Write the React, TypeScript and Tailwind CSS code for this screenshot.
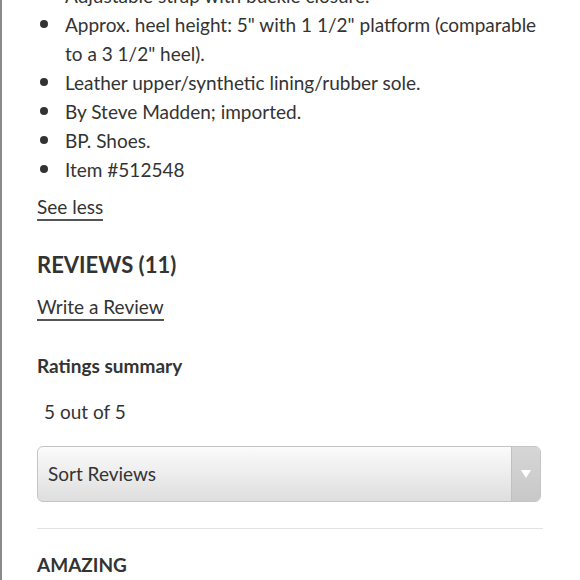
import React from "react";

const items = [
  "Adjustable strap with buckle closure.",
  "Approx. heel height: 5\" with 1 1/2\" platform (comparable to a 3 1/2\" heel).",
  "Leather upper/synthetic lining/rubber sole.",
  "By Steve Madden; imported.",
  "BP. Shoes.",
  "Item #512548",
];

export default function App() {
  return (
    <div
      className="w-[580px] h-[580px] overflow-hidden bg-white border-l-2 border-[#8a8a8a] text-[#333333]"
      style={{ fontFamily: "Lato, 'Open Sans', sans-serif" }}
    >
      <div className="pl-[35px] pr-[37px]">
        <ul className="mt-[-19px] text-[19px] leading-[29px]">
          {items.map((t) => (
            <li key={t} className="flex">
              <span className="w-[28px] shrink-0 flex pt-[10px] pl-[3px]">
                <span className="block w-[8px] h-[8px] rounded-full bg-[#333333]" />
              </span>
              <span>{t}</span>
            </li>
          ))}
        </ul>
        <div className="mt-[8px] text-[19px] leading-[29px]">
          <span className="border-b-2 border-[#555555] pb-[1px]">See less</span>
        </div>
        <h2 className="mt-[29px] text-[22px] font-bold leading-[30px]">REVIEWS (11)</h2>
        <div className="mt-[12px] text-[19px] leading-[29px]">
          <span className="border-b-2 border-[#555555] pb-[1px]">Write a Review</span>
        </div>
        <h3 className="mt-[30px] text-[19px] font-bold leading-[29px]">Ratings summary</h3>
        <div className="mt-[17px] pl-[7px] text-[19px] leading-[29px]">5 out of 5</div>
        <div className="mt-[20px] w-[504px] h-[56px] flex rounded-[6px] border border-[#c4c4c4] bg-gradient-to-b from-[#fbfbfb] to-[#dedede] overflow-hidden">
          <div className="flex-1 flex items-center pl-[10px] text-[19px]">Sort Reviews</div>
          <div className="w-[29px] flex items-center justify-center bg-gradient-to-b from-[#d6d6d6] to-[#c8c8c8] border-l border-[#c0c0c0]">
            <svg width="10" height="8" viewBox="0 0 10 8">
              <path d="M0 0 L10 0 L5 8 Z" fill="#ffffff" />
            </svg>
          </div>
        </div>
        <div className="mt-[26px] w-[506px] h-px bg-[#e3e3e3]" />
        <h3 className="mt-[21px] text-[19px] font-bold leading-[29px]">AMAZING</h3>
      </div>
    </div>
  );
}
